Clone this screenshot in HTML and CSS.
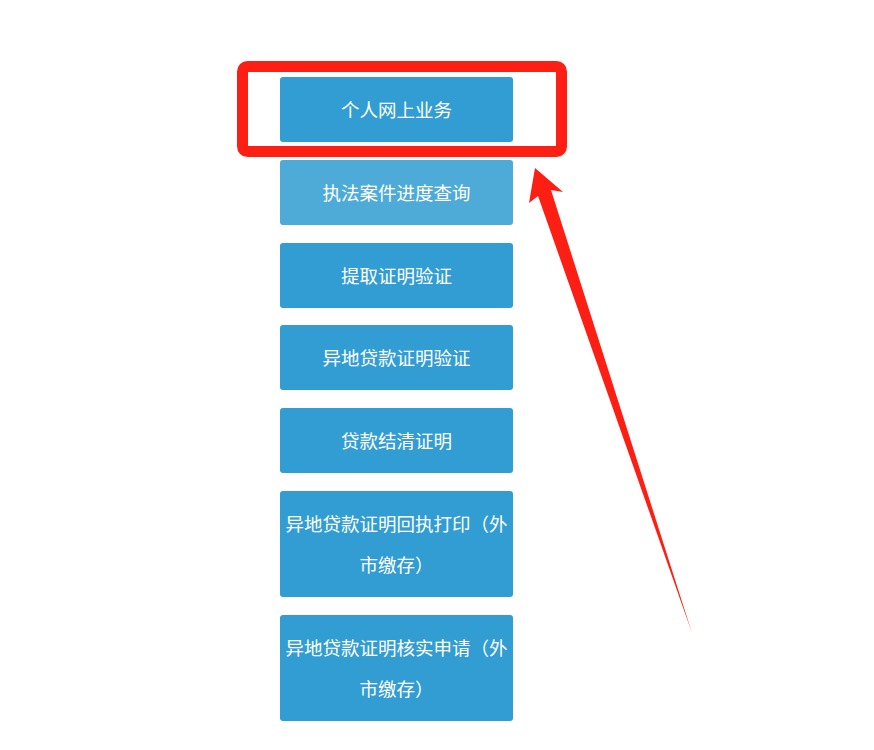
FILE: index.html
```html
<!DOCTYPE html>
<html lang="zh-CN">
<head>
<meta charset="utf-8">
<title>业务</title>
<link rel="stylesheet" href="styles.css">
</head>
<body>
<div class="page">
  <ul class="menu">
    <li><a class="btn" href="#">个人网上业务</a></li>
    <li><a class="btn btn-hover" href="#">执法案件进度查询</a></li>
    <li><a class="btn" href="#">提取证明验证</a></li>
    <li><a class="btn" href="#">异地贷款证明验证</a></li>
    <li><a class="btn" href="#">贷款结清证明</a></li>
    <li><a class="btn" href="#">异地贷款证明回执打印（外市缴存）</a></li>
    <li><a class="btn" href="#">异地贷款证明核实申请（外市缴存）</a></li>
  </ul>
  <svg class="annot" width="874" height="750" viewBox="0 0 874 750" aria-hidden="true">
    <rect x="242.5" y="66.5" width="319" height="85" rx="5" ry="5" fill="none" stroke="#fe1f14" stroke-width="11"/>
    <polygon points="535,168 563,192 551,190 692,633 538,196 529,203" fill="#fe1f14"/>
  </svg>
</div>
</body>
</html>
```

FILE: styles.css
```css
html, body {
  margin: 0;
  padding: 0;
  background: #ffffff;
}

.page {
  position: relative;
  width: 874px;
  height: 750px;
  overflow: hidden;
}

.menu {
  list-style: none;
  margin: 0;
  padding: 77px 0 0 280px;
  display: flex;
  flex-direction: column;
  gap: 17.8px;
}

.btn {
  display: block;
  box-sizing: border-box;
  width: 233px;
  padding: 12px 0;
  line-height: 41px;
  background: #329dd2;
  border-radius: 3px;
  color: #ffffff;
  text-decoration: none;
  text-align: center;
  font-family: "Noto Sans CJK SC", "Noto Sans", sans-serif;
  font-size: 18.5px;
}

.btn-hover {
  background: #4eabd8;
}

.annot {
  position: absolute;
  left: 0;
  top: 0;
  pointer-events: none;
}
```
